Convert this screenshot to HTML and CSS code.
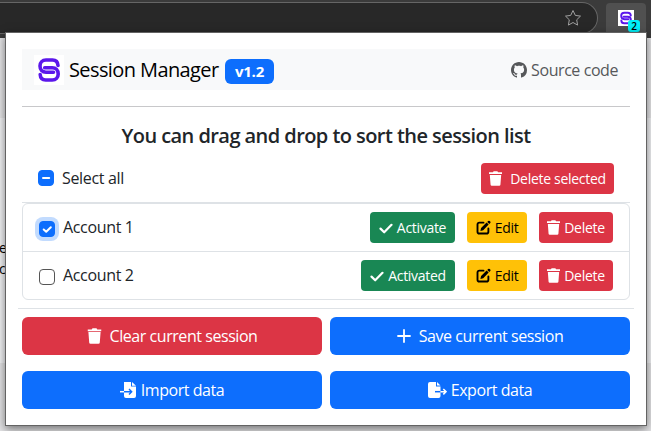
FILE: index.html
```
<!DOCTYPE html>
<html lang="en">
<head>
<meta charset="utf-8">
<title>Session Manager</title>
<link rel="stylesheet" href="styles.css">
</head>
<body>
<svg class="defs" width="0" height="0">
  <symbol id="logo" viewBox="0 0 30 30">
    <rect width="30" height="30" fill="#fff"/>
    <path d="M24 10.500C23.800 6.800 22 5 18.500 5H12C8.300 5 6 7.400 6 11s2.300 6.200 6 6.200h7.500" fill="none" stroke="#5b17eb" stroke-width="3.600" stroke-linecap="round"/>
    <path d="M6.200 19.500C6.400 23.200 8.200 25 11.700 25h6.500c3.700 0 6-2.400 6-6s-2.300-6.200-6-6.200h-7.500" fill="none" stroke="#5b17eb" stroke-width="3.600" stroke-linecap="round"/>
  </symbol>
  <symbol id="trash" viewBox="0 0 14 16">
    <path d="M0 1.400h4.200L5 .3h4l.8 1.100H14v1.800H0zM.9 4.100h12.200l-.8 10.500q-.1 1.200-1.300 1.200H3q-1.200 0-1.300-1.200z" fill="currentColor"/>
  </symbol>
  <symbol id="check" viewBox="0 0 14 14">
    <path d="M1.500 7.600l3.700 3.700 7.300-7.500" fill="none" stroke="currentColor" stroke-width="2.200" stroke-linecap="round" stroke-linejoin="round"/>
  </symbol>
  <symbol id="edit" viewBox="0 0 16 16">
    <path d="M8 2.800H3.600Q1.600 2.800 1.600 4.800v7.600q0 2 2 2h7.600q2 0 2-2V9" fill="none" stroke="currentColor" stroke-width="2" stroke-linecap="round"/>
    <path d="M11.300 2.700l2.200 2.200-5.800 5.900-3 .8.700-3zM12 2l.9-.9q.9-.8 1.800 0l.5.500q.8.900 0 1.700l-1 1z" fill="currentColor"/>
  </symbol>
</svg>

<div class="browser">
  <header class="toolbar">
    <div class="address">
      <svg width="18" height="18" viewBox="0 0 18 18"><path d="M9 1.500l2.300 4.900 5.200.7-3.800 3.700.9 5.300L9 13.500l-4.600 2.600.9-5.300-3.800-3.700 5.200-.7z" fill="none" stroke="#a0a0a0" stroke-linejoin="round"/></svg>
    </div>
    <div class="extension">
      <svg width="16" height="16"><use href="#logo"/></svg>
      <span class="count">2</span>
    </div>
  </header>
  <main class="site"><p>ex<br>c</p></main>
</div>

<section class="popup">
  <nav class="navbar">
    <svg width="30" height="30"><use href="#logo"/></svg>
    <h1>Session Manager</h1>
    <span class="version">v1.2</span>
    <a class="source">
      <svg width="16" height="16" viewBox="0 0 16 16"><path fill="currentColor" d="M8 0C3.580 0 0 3.580 0 8c0 3.540 2.290 6.530 5.470 7.590.4.070.55-.17.55-.38 0-.19-.01-.82-.01-1.490-2.010.37-2.530-.49-2.690-.94-.09-.23-.48-.94-.82-1.130-.28-.15-.68-.52-.01-.53.63-.01 1.080.58 1.230.82.72 1.210 1.870.87 2.330.66.070-.52.28-.87.51-1.070-1.780-.2-3.640-.89-3.640-3.950 0-.87.31-1.590.82-2.150-.08-.2-.36-1.020.08-2.120 0 0 .67-.21 2.200.82.64-.18 1.320-.27 2-.27s1.360.09 2 .27c1.530-1.040 2.200-.82 2.200-.82.44 1.100.16 1.920.08 2.120.51.56.82 1.270.82 2.150 0 3.070-1.870 3.750-3.650 3.950.29.25.54.73.54 1.480 0 1.070-.01 1.930-.01 2.200 0 .21.15.46.55.38A8.010 8.010 0 0 0 16 8c0-4.420-3.580-8-8-8z"/></svg>
      <span>Source code</span>
    </a>
  </nav>
  <hr class="rule">
  <h2>You can drag and drop to sort the session list</h2>
  <div class="selection">
    <span class="box mixed"><svg width="16" height="16" viewBox="0 0 16 16"><path d="M5 8h6.200" stroke="#fff" stroke-width="2" stroke-linecap="round"/></svg></span>
    <span class="label">Select all</span>
    <button class="btn small red wide"><svg width="13" height="15"><use href="#trash"/></svg><span>Delete selected</span></button>
  </div>
  <ul class="sessions">
    <li>
      <span class="box checked"><svg width="16" height="16" viewBox="0 0 16 16"><path d="M4.700 8.500l2.500 2.300 4.600-4.600" fill="none" stroke="#fff" stroke-width="2" stroke-linecap="round" stroke-linejoin="round"/></svg></span>
      <span class="label">Account 1</span>
      <button class="btn small green activate"><svg width="14" height="14"><use href="#check"/></svg><span>Activate</span></button>
      <button class="btn small yellow"><svg width="15" height="15"><use href="#edit"/></svg><span>Edit</span></button>
      <button class="btn small red"><svg width="13" height="15"><use href="#trash"/></svg><span>Delete</span></button>
    </li>
    <li>
      <span class="box"></span>
      <span class="label">Account 2</span>
      <button class="btn small green activated"><svg width="14" height="14"><use href="#check"/></svg><span>Activated</span></button>
      <button class="btn small yellow"><svg width="15" height="15"><use href="#edit"/></svg><span>Edit</span></button>
      <button class="btn small red"><svg width="13" height="15"><use href="#trash"/></svg><span>Delete</span></button>
    </li>
  </ul>
  <hr class="divider">
  <div class="actions">
    <button class="btn red spaced"><svg width="15" height="16" viewBox="0 0 14 16"><use href="#trash"/></svg><span>Clear current session</span></button>
    <button class="btn blue spaced"><svg width="14" height="14" viewBox="0 0 14 14"><path d="M7 1v12M1 7h12" stroke="#fff" stroke-width="1.800" stroke-linecap="round"/></svg><span>Save current session</span></button>
    <button class="btn blue"><svg width="17" height="16" viewBox="0 0 17 16"><path d="M4 0h7v4.500h5V14q0 2-2 2H6q-2 0-2-2zM12 0l4 3.700h-4z" fill="#fff"/><path d="M4 9.700h7.500M9 7l2.700 2.700L9 12.400" fill="none" stroke="#0d6efd" stroke-width="1.400"/><path d="M0 9.700h4" stroke="#fff" stroke-width="1.500"/></svg><span>Import data</span></button>
    <button class="btn blue"><svg width="19" height="16" viewBox="0 0 19 16"><path d="M2 0h6v4.500h4.500V14q0 2-2 2H2q-2 0-2-2V2q0-2 2-2zM9 0l3.500 3.500H9z" fill="#fff"/><path d="M7 9.700h5.500" stroke="#0d6efd" stroke-width="1.500"/><path d="M12.500 9.700H18M15.300 7L18 9.700l-2.700 2.700" fill="none" stroke="#fff" stroke-width="1.600"/></svg><span>Export data</span></button>
  </div>
</section>
</body>
</html>
```

FILE: styles.css
```
* { box-sizing: border-box; }
html, body { margin: 0; width: 651px; height: 431px; overflow: hidden; }
body { position: relative; font: 16px/24px "Open Sans", "Noto Sans", sans-serif; color: #212529; background: #3b3b3b; }
svg { display: block; flex: none; }
.defs { position: absolute; }
.browser { height: 431px; display: flex; flex-direction: column; }
.toolbar { height: 38px; flex: none; display: flex; padding-top: 2px; gap: 8px; background: #3b3b3b; }
.address { width: 598px; height: 32px; border: 1px solid #666; border-left: 0; border-radius: 0 16px 16px 0; background: #282828; display: flex; align-items: center; justify-content: flex-end; padding-right: 15px; }
.extension { position: relative; width: 40px; height: 33px; margin-top: 1px; border-radius: 4px; background: #505050; padding: 7px 0 0 12px; }
.count { position: absolute; left: 22px; top: 17px; width: 12px; height: 12px; border-radius: 3px; background: #00f0f8; color: #000; font: 600 10px/12px "Open Sans", sans-serif; text-align: center; }
.site { flex: 1; overflow: hidden; background: linear-gradient(#e6e6e8 80px, #f2f3f5 80px, #f2f3f5 325px, #e4e4e6 325px); color: #000; }
.site p { margin: 199px 0 0 -1px; font-size: 14px; line-height: 21px; letter-spacing: -.8px; }
.popup { position: absolute; left: 5px; top: 32px; width: 642px; height: 394px; padding: 16px; border: 1px solid #636363; background: #fff; box-shadow: 0 3px 9px rgba(0,0,0,.5); }
.navbar { height: 41px; display: flex; align-items: center; padding: 0 12px; background: #f8f9fa; color: #000; }
h1 { width: 151px; margin: 0 5px 0 5px; font-size: 20px; font-weight: 400; letter-spacing: -.6px; line-height: 30px; white-space: nowrap; }
.version { width: 49px; height: 25px; margin-top: 3px; border-radius: 6px; background: #0d6efd; color: #fff; font-size: 15px; font-weight: 700; line-height: 25px; letter-spacing: -.2px; text-align: center; }
.source { display: flex; align-items: center; gap: 4px; margin-left: auto; color: #56585a; letter-spacing: -.43px; white-space: nowrap; }
.rule { height: 1px; border: 0; margin: 16px 0; background: #c8c8ca; }
h2 { height: 24px; margin: 0; font-size: 20px; line-height: 26px; font-weight: 600; text-align: center; letter-spacing: -.56px; white-space: nowrap; }
.selection { height: 56px; display: flex; align-items: center; padding: 8px 16px 0; border-bottom: 1px solid #dee2e6; }
.box { width: 16px; height: 16px; flex: none; border: 1px solid #555; border-radius: 4px; background: #fff; }
.box svg { margin: -1px; }
.mixed, .checked { border-color: #0d6efd; background: #0d6efd; }
.mixed { margin-bottom: 2px; }
.checked { box-shadow: 0 0 0 4px #c2dbfe; }
.label { margin: 0 auto 1px 8px; letter-spacing: -.34px; white-space: nowrap; }
.btn { display: flex; align-items: center; justify-content: center; gap: 4px; height: 38px; padding: 0; border: 0; border-radius: 6px; color: #fff; font: inherit; letter-spacing: -.44px; white-space: nowrap; }
.small { width: 74px; height: 31px; border-radius: 4px; font-size: 14px; line-height: 21px; letter-spacing: -.3px; gap: 4px; }
.red { background: #dc3545; }
.green { background: #198754; }
.yellow { width: 60px; background: #ffc107; color: #000; }
.blue { background: #0d6efd; }
.activate { width: 85px; }
.activated { width: 94px; }
.wide { width: 133px; gap: 8px; }
.spaced { gap: 8px; }
.sessions { height: 97px; margin: 0; padding: 0; list-style: none; border: 1px solid #dee2e6; border-radius: 6px; }
.sessions li { height: 47px; display: flex; align-items: center; gap: 12px; padding: 0 16px; }
.sessions li + li { height: 48px; border-top: 1px solid #dee2e6; }
.sessions .label { margin-left: -4px; }
.sessions .box { margin-top: 3px; }
.divider { height: 1px; margin: 8px -4px; border: 0; background: #dee2e6; }
.actions { display: grid; grid-template-columns: 300px 300px; gap: 16px 8px; }
```
